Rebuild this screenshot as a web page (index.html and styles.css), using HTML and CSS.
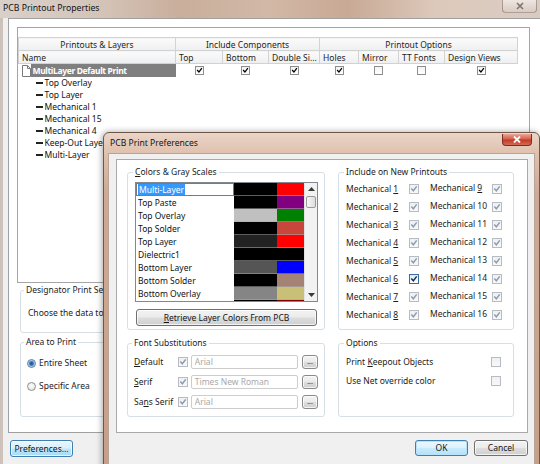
FILE: index.html
```html
<!DOCTYPE html>
<html>
<head>
<meta charset="utf-8">
<title>PCB Print Preferences</title>
<link rel="stylesheet" href="styles.css">
</head>
<body>
<div class="win-outer">
  <div class="outer-title">
    <span class="outer-title-text">PCB Printout Properties</span>
    <span class="outer-close"><svg viewBox="0 0 8 8" width="8" height="8"><path d="M1 1 L7 7 M7 1 L1 7"/></svg></span>
  </div>
  <div class="outer-client">
    <div class="page">
      <div class="treebox">
        <table class="grid">
          <colgroup>
            <col class="w-name"><col class="w-top"><col class="w-bottom"><col class="w-double"><col class="w-holes"><col class="w-mirror"><col class="w-tt"><col class="w-dv">
          </colgroup>
          <thead>
            <tr class="hg"><th>Printouts &amp; Layers</th><th colspan="3">Include Components</th><th colspan="4">Printout Options</th></tr>
            <tr class="hc"><th>Name</th><th>Top</th><th>Bottom</th><th>Double Si...</th><th>Holes</th><th>Mirror</th><th>TT Fonts</th><th>Design Views</th></tr>
          </thead>
          <tbody>
            <tr class="r-root">
              <td class="name"><div class="rootcell"><span class="doc"><svg viewBox="0 0 10 12" width="10" height="12"><path class="pg" d="M1.5 0.5 H6.5 L9.5 3.5 V11.5 H1.5 Z"/><path class="fold" d="M6.5 0.5 V3.5 H9.5"/></svg></span><span class="sel">MultiLayer Default Print</span></div></td>
              <td class="cbc"><span class="tcb"><svg class="ck" viewBox="0 0 10 10"><path d="M2.2 5 L4.2 7.2 L7.8 2.4"/></svg></span></td>
              <td class="cbc"><span class="tcb"><svg class="ck" viewBox="0 0 10 10"><path d="M2.2 5 L4.2 7.2 L7.8 2.4"/></svg></span></td>
              <td class="cbc"><span class="tcb"><svg class="ck" viewBox="0 0 10 10"><path d="M2.2 5 L4.2 7.2 L7.8 2.4"/></svg></span></td>
              <td class="cbc"><span class="tcb"><svg class="ck" viewBox="0 0 10 10"><path d="M2.2 5 L4.2 7.2 L7.8 2.4"/></svg></span></td>
              <td class="cbc"><span class="tcb"></span></td>
              <td class="cbc"><span class="tcb"></span></td>
              <td class="cbc"><span class="tcb"><svg class="ck" viewBox="0 0 10 10"><path d="M2.2 5 L4.2 7.2 L7.8 2.4"/></svg></span></td>
            </tr>
            <tr class="r-child"><td class="name"><span class="dash"></span>Top Overlay</td><td colspan="7"></td></tr>
            <tr class="r-child"><td class="name"><span class="dash"></span>Top Layer</td><td colspan="7"></td></tr>
            <tr class="r-child"><td class="name"><span class="dash"></span>Mechanical 1</td><td colspan="7"></td></tr>
            <tr class="r-child"><td class="name"><span class="dash"></span>Mechanical 15</td><td colspan="7"></td></tr>
            <tr class="r-child"><td class="name"><span class="dash"></span>Mechanical 4</td><td colspan="7"></td></tr>
            <tr class="r-child"><td class="name"><span class="dash"></span>Keep-Out Layer</td><td colspan="7"></td></tr>
            <tr class="r-child"><td class="name"><span class="dash"></span>Multi-Layer</td><td colspan="7"></td></tr>
          </tbody>
        </table>
      </div>
      <fieldset class="grp desig">
        <legend>Designator Print Settings</legend>
        <div>Choose the data to print</div>
      </fieldset>
      <fieldset class="grp area">
        <legend>Area to Print</legend>
        <div class="radios">
          <div class="rrow"><span class="rb on"></span>Entire Sheet</div>
          <div class="rrow"><span class="rb"></span>Specific Area</div>
        </div>
      </fieldset>
    </div>
    <div class="outer-foot">
      <div class="btn pref">Preferences...</div>
    </div>
  </div>
</div>

<div class="dlg">
  <div class="dlg-title">
    <span class="dlg-title-text">PCB Print Preferences</span>
    <span class="dlg-close"><svg viewBox="0 0 8 7" width="8" height="7"><path d="M1 0.5 L7 6.5 M7 0.5 L1 6.5"/></svg></span>
  </div>
  <div class="dlg-client">
    <div class="dlg-panel">
      <fieldset class="grp colors">
        <legend><u>C</u>olors &amp; Gray Scales</legend>
        <div class="clist">
          <div class="clist-rows">
            <div class="crow"><div class="cname edit"><span class="hl">Multi-Layer</span></div><div class="c1 k-black"></div><div class="c2 k-red"></div></div>
            <div class="crow"><div class="cname">Top Paste</div><div class="c1 k-black"></div><div class="c2 k-purple"></div></div>
            <div class="crow"><div class="cname">Top Overlay</div><div class="c1 k-silver"></div><div class="c2 k-green"></div></div>
            <div class="crow"><div class="cname">Top Solder</div><div class="c1 k-black"></div><div class="c2 k-brick"></div></div>
            <div class="crow"><div class="cname">Top Layer</div><div class="c1 k-dark"></div><div class="c2 k-red"></div></div>
            <div class="crow"><div class="cname">Dielectric1</div><div class="c1 k-black"></div><div class="c2 k-black"></div></div>
            <div class="crow"><div class="cname">Bottom Layer</div><div class="c1 k-gray5"></div><div class="c2 k-blue"></div></div>
            <div class="crow"><div class="cname">Bottom Solder</div><div class="c1 k-black"></div><div class="c2 k-rose"></div></div>
            <div class="crow"><div class="cname">Bottom Overlay</div><div class="c1 k-gray8"></div><div class="c2 k-khaki"></div></div>
            <div class="crow"><div class="cname"></div><div class="c1 k-black"></div><div class="c2 k-maroon"></div></div>
          </div>
          <div class="sbar">
            <div class="sb-arrow"><svg viewBox="0 0 7 4" width="7" height="4"><polygon points="0,4 3.5,0 7,4"/></svg></div>
            <div class="sb-thumb"></div>
            <div class="sb-track"></div>
            <div class="sb-arrow"><svg viewBox="0 0 7 4" width="7" height="4"><polygon points="0,0 7,0 3.5,4"/></svg></div>
          </div>
        </div>
        <div class="btn retrieve"><span><u>R</u>etrieve Layer Colors From PCB</span></div>
      </fieldset>

      <fieldset class="grp include">
        <legend>Include on New Printouts</legend>
        <div class="mech">
          <span>Mechanical <u>1</u></span><span class="cbw"><span class="cb dis"><svg class="ck" viewBox="0 0 10 10"><path d="M2.2 5 L4.2 7.2 L7.8 2.4"/></svg></span></span><span class="up">Mechanical <u>9</u></span><span class="cbw"><span class="cb dis"><svg class="ck" viewBox="0 0 10 10"><path d="M2.2 5 L4.2 7.2 L7.8 2.4"/></svg></span></span>
          <span>Mechanical <u>2</u></span><span class="cbw"><span class="cb dis"><svg class="ck" viewBox="0 0 10 10"><path d="M2.2 5 L4.2 7.2 L7.8 2.4"/></svg></span></span><span class="up">Mechanical 10</span><span class="cbw"><span class="cb dis"><svg class="ck" viewBox="0 0 10 10"><path d="M2.2 5 L4.2 7.2 L7.8 2.4"/></svg></span></span>
          <span>Mechanical <u>3</u></span><span class="cbw"><span class="cb dis"><svg class="ck" viewBox="0 0 10 10"><path d="M2.2 5 L4.2 7.2 L7.8 2.4"/></svg></span></span><span class="up">Mechanical 11</span><span class="cbw"><span class="cb dis"><svg class="ck" viewBox="0 0 10 10"><path d="M2.2 5 L4.2 7.2 L7.8 2.4"/></svg></span></span>
          <span>Mechanical <u>4</u></span><span class="cbw"><span class="cb dis"><svg class="ck" viewBox="0 0 10 10"><path d="M2.2 5 L4.2 7.2 L7.8 2.4"/></svg></span></span><span class="up">Mechanical 12</span><span class="cbw"><span class="cb dis"><svg class="ck" viewBox="0 0 10 10"><path d="M2.2 5 L4.2 7.2 L7.8 2.4"/></svg></span></span>
          <span>Mechanical <u>5</u></span><span class="cbw"><span class="cb dis"><svg class="ck" viewBox="0 0 10 10"><path d="M2.2 5 L4.2 7.2 L7.8 2.4"/></svg></span></span><span class="up">Mechanical 13</span><span class="cbw"><span class="cb dis"><svg class="ck" viewBox="0 0 10 10"><path d="M2.2 5 L4.2 7.2 L7.8 2.4"/></svg></span></span>
          <span>Mechanical <u>6</u></span><span class="cbw"><span class="cb act"><svg class="ck" viewBox="0 0 10 10"><path d="M2.2 5 L4.2 7.2 L7.8 2.4"/></svg></span></span><span class="up">Mechanical 14</span><span class="cbw"><span class="cb dis"><svg class="ck" viewBox="0 0 10 10"><path d="M2.2 5 L4.2 7.2 L7.8 2.4"/></svg></span></span>
          <span>Mechanical <u>7</u></span><span class="cbw"><span class="cb dis"><svg class="ck" viewBox="0 0 10 10"><path d="M2.2 5 L4.2 7.2 L7.8 2.4"/></svg></span></span><span class="up">Mechanical 15</span><span class="cbw"><span class="cb dis"><svg class="ck" viewBox="0 0 10 10"><path d="M2.2 5 L4.2 7.2 L7.8 2.4"/></svg></span></span>
          <span>Mechanical <u>8</u></span><span class="cbw"><span class="cb dis"><svg class="ck" viewBox="0 0 10 10"><path d="M2.2 5 L4.2 7.2 L7.8 2.4"/></svg></span></span><span class="up">Mechanical 16</span><span class="cbw"><span class="cb dis"><svg class="ck" viewBox="0 0 10 10"><path d="M2.2 5 L4.2 7.2 L7.8 2.4"/></svg></span></span>
        </div>
      </fieldset>

      <fieldset class="grp fonts">
        <legend>Font Substitutions</legend>
        <div class="frow"><span class="flabel"><u>D</u>efault</span><span class="cb dis"><svg class="ck" viewBox="0 0 10 10"><path d="M2.2 5 L4.2 7.2 L7.8 2.4"/></svg></span><span class="tfield">Arial</span><span class="btn dots">...</span></div>
        <div class="frow"><span class="flabel"><u>S</u>erif</span><span class="cb dis"><svg class="ck" viewBox="0 0 10 10"><path d="M2.2 5 L4.2 7.2 L7.8 2.4"/></svg></span><span class="tfield">Times New Roman</span><span class="btn dots">...</span></div>
        <div class="frow"><span class="flabel">Sa<u>n</u>s Serif</span><span class="cb dis"><svg class="ck" viewBox="0 0 10 10"><path d="M2.2 5 L4.2 7.2 L7.8 2.4"/></svg></span><span class="tfield">Arial</span><span class="btn dots">...</span></div>
      </fieldset>

      <fieldset class="grp options">
        <legend>Options</legend>
        <div class="orow"><span>Print <u>K</u>eepout Objects</span><span class="cb dis"></span></div>
        <div class="orow"><span>Use Net override color</span><span class="cb dis"></span></div>
      </fieldset>
    </div>
    <div class="dlg-foot">
      <div class="btn okbtn">OK</div>
      <div class="btn cancelbtn">Cancel</div>
    </div>
  </div>
</div>
</body>
</html>
```

FILE: styles.css
```css
* { box-sizing: border-box; }
html, body { margin: 0; padding: 0; }
body {
  width: 540px;
  height: 464px;
  overflow: hidden;
  position: relative;
  background: #f0f0f0;
  font-family: "Noto Sans", "Open Sans", "DejaVu Sans", sans-serif;
  font-size: 8.5px;
  line-height: 12px;
  color: #1b1b1b;
}
u { text-decoration: underline; text-underline-offset: 1px; }

/* ---------- outer window ---------- */
.win-outer {
  position: absolute;
  left: 0;
  top: 0;
  width: 560px;
  height: 464px;
  display: flex;
  flex-direction: column;
}
.outer-title {
  height: 18px;
  flex: none;
  display: flex;
  align-items: flex-start;
  background: linear-gradient(90deg, #d9d0ca 0%, #d4c4b8 18%, #c9ae9c 32%, #d2b8a6 48%, #c8a995 62%, #ddc9bb 78%, #d8ccc4 100%);
}
.outer-title-text {
  margin: 2px 0 0 3px;
  font-size: 8.7px;
  color: #141414;
}
.outer-close {
  margin-left: auto;
  margin-right: 23px;
  width: 35px;
  height: 13px;
  border: 1px solid rgba(95, 75, 65, 0.45);
  border-top: none;
  border-radius: 0 0 4px 4px;
  background: linear-gradient(#efe6e0, #d9cbc2);
  display: flex;
  align-items: center;
  justify-content: center;
}
.outer-close path { stroke: #7c7470; stroke-width: 1.6; fill: none; }

.outer-client {
  flex: 1;
  display: flex;
  flex-direction: column;
  border-left: 3px solid #cdc2ba;
  padding-left: 5px;
  background: #f0f0f0;
}
.page {
  height: 415px;
  flex: none;
  background: #fff;
  border: 1px solid #a0a0a0;
  border-right: none;
  padding: 8px 0 0 8px;
}
.treebox {
  width: 513px;
  height: 256px;
  border: 1px solid #a5a5a5;
  padding-top: 9px;
}
.grid {
  table-layout: fixed;
  width: 499px;
  border-collapse: collapse;
}
.w-name { width: 157px; }
.w-top { width: 47px; }
.w-bottom { width: 46px; }
.w-double { width: 51px; }
.w-holes { width: 39px; }
.w-mirror { width: 40px; }
.w-tt { width: 46px; }
.w-dv { width: 73px; }

.grid th {
  height: 13px;
  padding: 0 0 0 3px;
  font-weight: normal;
  line-height: 11px;
  text-align: left;
  white-space: nowrap;
  overflow: hidden;
  border: 1px solid #d2d2d2;
  background: linear-gradient(#fbfbfb, #eeeff1);
  color: #1e1e1e;
}
.grid .hg th { text-align: center; padding: 0; }
.grid td { padding: 0; height: 12px; line-height: 12px; white-space: nowrap; }
.grid .r-root td { height: 13px; }
.cbc { text-align: center; }
.rootcell { display: flex; align-items: center; padding-left: 2px; height: 13px; }
.doc { width: 10px; height: 12px; display: flex; }
.doc .pg { fill: #fff; stroke: #7a7a7a; stroke-width: 1; }
.doc .fold { fill: none; stroke: #7a7a7a; stroke-width: 1; }
.sel {
  width: 145px;
  height: 13px;
  line-height: 13px;
  padding-left: 2px;
  background: #7f7f7f;
  color: #fff;
  font-weight: bold;
  letter-spacing: -0.35px;
}
.tcb {
  display: inline-block;
  width: 9px;
  height: 9px;
  border: 1px solid #8e8e8e;
  background: linear-gradient(#f4f4f4, #ffffff);
  vertical-align: middle;
  position: relative;
  top: -1px;
  color: #000;
}
.ck { display: block; width: 100%; height: 100%; }
.ck path { fill: none; stroke: currentColor; stroke-width: 1.8; stroke-linecap: square; }
.r-child .name { padding-left: 17px; color: #111; }
.dash {
  display: inline-block;
  width: 7px;
  height: 2px;
  background: #222;
  vertical-align: middle;
  margin-right: 2px;
  position: relative;
  top: -1px;
}

.grp {
  margin: 0;
  min-width: 0;
  border: 1px solid #d5dfe5;
  border-radius: 3px;
  padding: 0 7px;
}
.grp legend {
  padding: 0 2px;
  margin-left: -2px;
  line-height: 12px;
  color: #1b1b1b;
}
.desig {
  margin: 1px 0 0 3px;
  width: 300px;
  height: 49px;
  padding-top: 11px;
}
.desig legend { margin-left: -4px; }
.area {
  margin: 3px 0 0 3px;
  width: 300px;
  height: 81px;
  padding: 9px 6px 0;
}
.area legend { margin-left: -3px; }
.radios { display: flex; flex-direction: column; gap: 11px; }
.rrow { display: flex; align-items: center; height: 12px; }
.rb {
  width: 9px;
  height: 9px;
  border-radius: 50%;
  border: 1px solid #8f8f8f;
  background: radial-gradient(circle at 50% 40%, #ffffff, #dcdcdc);
  margin-right: 3px;
}
.rb.on { background: radial-gradient(circle, #1d4f8c 0, #3f7cc0 2px, #a9c8e6 3px, #eef4fa 4px); border-color: #5a7fa6; }

.outer-foot { padding: 7px 0 0 2px; }

.btn {
  display: flex;
  align-items: center;
  justify-content: center;
  border: 1px solid #707070;
  border-radius: 3px;
  background: linear-gradient(#f3f3f3 0%, #ebebeb 48%, #dddddd 52%, #cfcfcf 100%);
  box-shadow: inset 0 0 0 1px rgba(255, 255, 255, 0.75);
  color: #141414;
  line-height: 12px;
  white-space: nowrap;
}
.pref {
  width: 63px;
  height: 17px;
  border-color: #3c7fb1;
  background: linear-gradient(#eaf6fd 0%, #d9f0fc 48%, #bee6fd 52%, #a7d9f5 100%);
}

/* ---------- dialog ---------- */
.dlg {
  position: absolute;
  left: 103px;
  top: 132px;
  width: 437px;
  height: 340px;
  border: 1px solid #6e5648;
  border-radius: 6px 6px 0 0;
  background: linear-gradient(180deg, #ead5c8 0px, #dfc1ae 20px, #cfa993 60px, #c79f89 100%);
  padding: 0 4px;
  display: flex;
  flex-direction: column;
  box-shadow: -1px 0 6px rgba(0, 0, 0, 0.35);
}
.dlg-title {
  height: 20px;
  flex: none;
  display: flex;
  align-items: flex-start;
}
.dlg-title-text {
  margin: 4px 0 0 2px;
  font-size: 8.6px;
  color: #141414;
}
.dlg-close {
  margin: 1px 3px 0 auto;
  width: 30px;
  height: 12px;
  border: 1px solid #7a2e22;
  border-top: none;
  border-radius: 0 0 4px 4px;
  background: linear-gradient(#e9a596 0%, #d5604c 45%, #c23b27 55%, #d46a55 100%);
  display: flex;
  align-items: center;
  justify-content: center;
}
.dlg-close path { stroke: #fff; stroke-width: 1.8; fill: none; }
.dlg-client {
  flex: 1;
  background: #f0f0f0;
  display: flex;
  flex-direction: column;
  box-shadow: inset 0 0 0 1px #b9a396;
}
.dlg-panel {
  margin: 6px 7px 0 8px;
  height: 274px;
  flex: none;
  background: #fff;
  border: 1px solid #a9a9a9;
  padding: 6px 13px 0 10px;
  display: grid;
  grid-template-columns: 198px 176px;
  grid-template-rows: 164px 80px;
  gap: 7px 13px;
}
.colors { padding-top: 4px; }
.clist {
  display: flex;
  width: 183px;
  height: 120px;
  border: 1px solid #828790;
  overflow: hidden;
}
.clist-rows { width: 168px; overflow: hidden; }
.crow {
  display: grid;
  grid-template-columns: 98px 43px 27px;
  height: 13px;
}
.cname { padding-left: 2px; line-height: 13px; white-space: nowrap; color: #111; }
.cname.edit { border: 1px solid #7a7a7a; padding-left: 1px; line-height: 11px; }
.hl { background: #3399ff; color: #fff; padding: 0 1px; }
.c1, .c2 { border-bottom: 1px solid rgba(170, 170, 170, 0.55); }
.k-black { background: #000; }
.k-red { background: #ff0000; }
.k-purple { background: #800080; }
.k-silver { background: #c0c0c0; }
.k-green { background: #008000; }
.k-brick { background: #c8463c; }
.k-dark { background: #222; }
.k-gray5 { background: #555; }
.k-blue { background: #0000ff; }
.k-rose { background: #a48274; }
.k-gray8 { background: #858585; }
.k-khaki { background: #c9c078; }
.k-maroon { background: #800000; }
.sbar {
  width: 13px;
  background: #f2f2f2;
  border-left: 1px solid #e3e3e3;
  display: flex;
  flex-direction: column;
  align-items: center;
}
.sb-arrow { height: 12px; width: 12px; display: flex; align-items: center; justify-content: center; }
.sb-arrow polygon { fill: #3a3a3a; }
.sb-thumb {
  width: 10px;
  height: 12px;
  margin-top: 1px;
  border: 1px solid #9a9a9a;
  border-radius: 2px;
  background: linear-gradient(90deg, #f6f6f6, #dedede);
}
.sb-track { flex: 1; }
.retrieve {
  margin: 7px 0 0 1px;
  width: 181px;
  height: 17px;
}

.include { padding-top: 2px; }
.mech {
  display: grid;
  grid-template-columns: 63px 21px 62px 10px;
  grid-auto-rows: 18px;
  align-items: center;
  white-space: nowrap;
}
.mech .up { position: relative; top: -1px; }
.cbw { display: flex; align-items: center; }
.cb {
  display: inline-block;
  width: 10px;
  height: 10px;
  flex: none;
  border: 1px solid #b8bcc2;
  background: linear-gradient(#eef0f2, #f8f8f8);
  color: #8d9bb0;
}
.cb.act {
  border-color: #3d6b9c;
  background: linear-gradient(#d8ecfb, #ffffff);
  color: #1b2d55;
}

.fonts { padding: 3px 6px 0; }
.frow { display: flex; align-items: center; height: 20px; }
.flabel { width: 44px; white-space: nowrap; }
.frow .cb { margin-right: 3px; }
.tfield {
  width: 108px;
  height: 14px;
  border: 1px solid #cdcdcd;
  border-radius: 2px;
  background: #fff;
  color: #a9a9a9;
  padding-left: 3px;
  line-height: 12px;
  margin-right: 4px;
  white-space: nowrap;
}
.dots {
  width: 16px;
  height: 14px;
  font-size: 7px;
  line-height: 8px;
  border-color: #8a8a8a;
  color: #333;
}

.options { padding: 3px 12px 0 7px; }
.orow { display: flex; align-items: center; justify-content: space-between; height: 19px; }

.dlg-foot {
  display: flex;
  justify-content: flex-end;
  gap: 6px;
  padding: 7px 7px 0 0;
}
.okbtn {
  width: 53px;
  height: 16px;
  border-color: #3c7fb1;
  box-shadow: inset 0 0 0 1px #b6e2fb;
  background: linear-gradient(#ecf7fd 0%, #dff2fc 48%, #c8ebfd 52%, #b4e0f7 100%);
}
.cancelbtn { width: 54px; height: 16px; }
```
